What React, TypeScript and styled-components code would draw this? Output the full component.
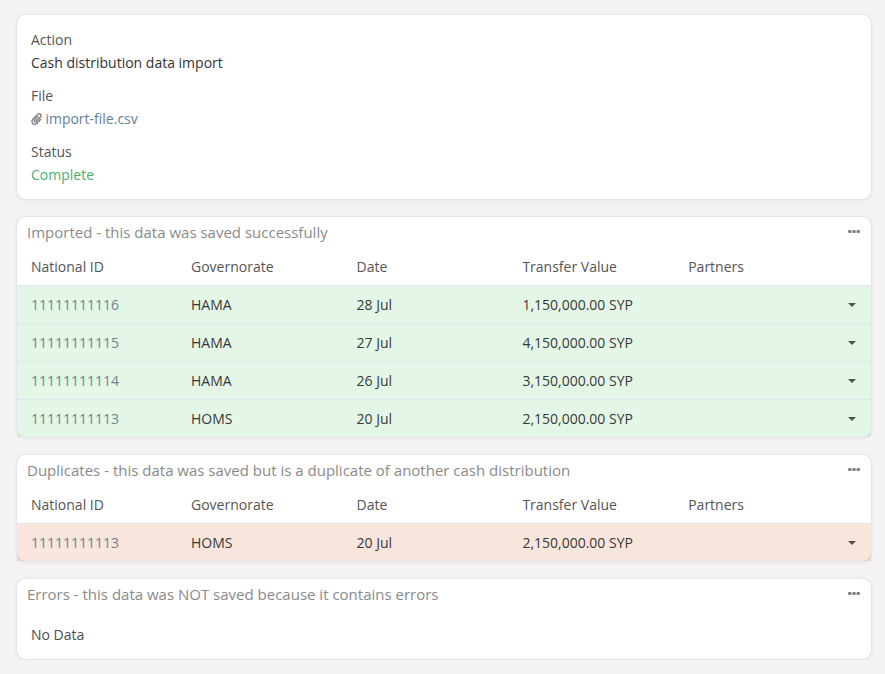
import React from "react";
import styled, { createGlobalStyle } from "styled-components";
import { FaPaperclip } from "react-icons/fa";

const GlobalStyle = createGlobalStyle`
  * { box-sizing: border-box; }
  body { margin: 0; background: #f4f2f3; font-family: "Open Sans", sans-serif; font-size: 14px; color: #4d4d4d; }
`;

const Page = styled.main`
  display: flex;
  flex-direction: column;
  gap: 16px;
  padding: 14px 13px 0 16px;
`;

const Card = styled.section`
  background: #fff;
  border: 1px solid #e4e4f2;
  border-radius: 10px;
  box-shadow: 0 1px 4px rgba(60, 50, 90, 0.06);
`;

const Details = styled(Card)`
  height: 186px;
  padding: 13px 14px;
  display: flex;
  flex-direction: column;
  gap: 10px;
`;

const Field = styled.div`
  line-height: 23px;
`;

const Label = styled.div`
  color: #555;
`;

const Value = styled.div<{ $color?: string }>`
  color: ${(p) => p.$color ?? "#333"};
  display: flex;
  align-items: center;
  gap: 3.4px;
`;

const ClipIcon = styled(FaPaperclip)`
  width: 11px;
  height: 12px;
  color: #808080;
`;

const Header = styled.header`
  height: 31px;
  padding: 0 11px 2px 10px;
  display: flex;
  justify-content: space-between;
  align-items: center;
`;

const Title = styled.h2`
  margin: 0;
  font-size: 15px;
  font-weight: 400;
  color: #8a8a8a;
`;

const Row = styled.div<{ $bg?: string }>`
  display: grid;
  grid-template-columns: 160px 165.6px 165.8px 165.8px 1fr auto;
  align-items: center;
  height: ${(p) => (p.$bg ? 38 : 37)}px;
  padding: 0 15px 0 14px;
  color: ${(p) => (p.$bg ? "#383838" : "#555")};
  background: ${(p) => p.$bg ?? "none"};
  background-clip: padding-box;
  border-top: ${(p) => (p.$bg ? "1px solid #e1e5ee" : "none")};
`;

const IdLink = styled.span`
  color: #6f8296;
`;

const Empty = styled.div`
  height: 49px;
  padding: 15px 14px 0;
`;

const Dots = () => (
  <svg width="12" height="4" viewBox="0 0 12 4" fill="#858083">
    <rect x="0" y="0" width="3.5" height="3" rx="1" />
    <rect x="4.25" y="0" width="3.5" height="3" rx="1" />
    <rect x="8.5" y="0" width="3.5" height="3" rx="1" />
  </svg>
);

const Caret = () => (
  <svg width="8" height="4" viewBox="0 0 8 4" fill="#505050">
    <path d="M0 0h8L4 4z" />
  </svg>
);

type Transfer = [string, string, string, string];

const imported: Transfer[] = [
  ["11111111116", "HAMA", "28 Jul", "1,150,000.00 SYP"],
  ["11111111115", "HAMA", "27 Jul", "4,150,000.00 SYP"],
  ["11111111114", "HAMA", "26 Jul", "3,150,000.00 SYP"],
  ["11111111113", "HOMS", "20 Jul", "2,150,000.00 SYP"],
];

const PanelHeader = ({ title }: { title: string }) => (
  <Header>
    <Title>{title}</Title>
    <Dots />
  </Header>
);

const Table = ({ title, rows, bg }: { title: string; rows: Transfer[]; bg: string }) => (
  <Card>
    <PanelHeader title={title} />
    <Row>
      <span>National ID</span>
      <span>Governorate</span>
      <span>Date</span>
      <span>Transfer Value</span>
      <span>Partners</span>
    </Row>
    {rows.map(([id, gov, date, value]) => (
      <Row key={id} $bg={bg}>
        <IdLink>{id}</IdLink>
        <span>{gov}</span>
        <span>{date}</span>
        <span>{value}</span>
        <span />
        <Caret />
      </Row>
    ))}
  </Card>
);

export default function App() {
  return (
    <>
      <GlobalStyle />
      <Page>
        <Details>
          <Field>
            <Label>Action</Label>
            <Value>Cash distribution data import</Value>
          </Field>
          <Field>
            <Label>File</Label>
            <Value $color="#647f99"><ClipIcon />import-file.csv</Value>
          </Field>
          <Field>
            <Label>Status</Label>
            <Value $color="#4caf70">Complete</Value>
          </Field>
        </Details>
        <Table title="Imported - this data was saved successfully" rows={imported} bg="rgba(75, 200, 92, 0.15)" />
        <Table
          title="Duplicates - this data was saved but is a duplicate of another cash distribution"
          rows={imported.slice(3)}
          bg="rgba(208, 82, 12, 0.15)"
        />
        <Card>
          <PanelHeader title="Errors - this data was NOT saved because it contains errors" />
          <Empty>No Data</Empty>
        </Card>
      </Page>
    </>
  );
}
